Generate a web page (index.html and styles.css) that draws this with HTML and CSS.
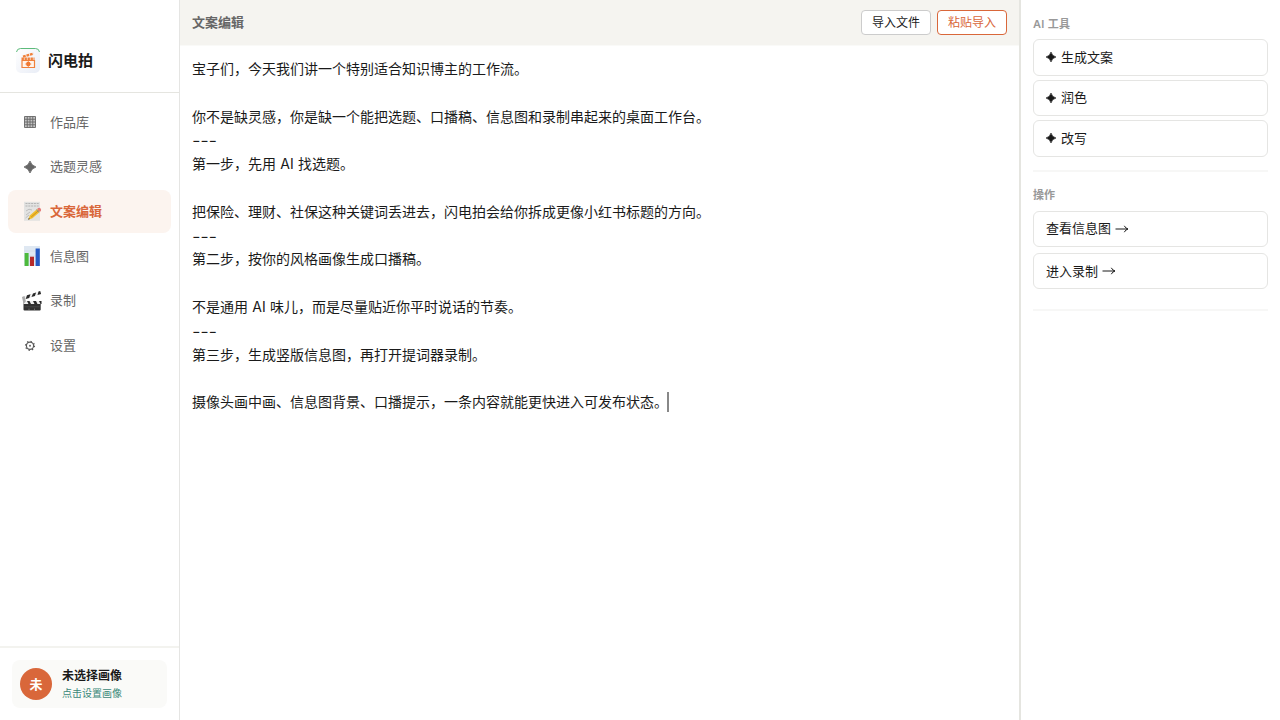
FILE: index.html
```html
<!DOCTYPE html>
<html lang="zh-CN">
<head>
  <meta charset="UTF-8" />
  <meta name="viewport" content="width=device-width, initial-scale=1.0"/>
  <title>闪电拍</title>
  <link rel="stylesheet" href="styles.css">
</head>
<body>
  <aside class="sidebar">
    <div class="brand">
      <svg class="brand-logo" viewBox="0 0 24 25">
        <defs>
          <linearGradient id="logoBg" x1="0" y1="0" x2="1" y2="1">
            <stop offset="0" stop-color="#ffffff"/>
            <stop offset="1" stop-color="#e9edf6"/>
          </linearGradient>
        </defs>
        <rect width="24" height="25" rx="5" fill="url(#logoBg)"/>
        <path d="M.5 4Q1 .5 4.5 .5H19.5Q23 .5 23.5 4" fill="none" stroke="#5dbb7b"/>
        <path d="M6 12.5V19.5H18.5V12.5Z" fill="#fff3ea" stroke="#f0803a" stroke-width="1.2"/>
        <path d="M5.5 10.8H18.5" stroke="#f0803a" stroke-width="2.6" stroke-dasharray="2.4 .6"/>
        <path d="M7 8.6L17.5 5.6" stroke="#f0803a" stroke-width="2.2" stroke-dasharray="2.8 .8"/>
        <circle cx="12.3" cy="16" r="2.2" fill="#f0702a"/>
        <path d="M12.3 13V19M9.3 16H15.3" stroke="#f0803a" stroke-width=".8"/>
      </svg>
      <span class="brand-name">闪电拍</span>
    </div>

    <nav class="nav">
      <a class="nav-item">
        <svg class="nav-icon" viewBox="0 0 20 20">
          <path d="M2.5 4.5H13.5V15.5H2.5ZM2.5 7.25H13.5M2.5 10H13.5M2.5 12.75H13.5M5.25 4.5V15.5M8 4.5V15.5M10.75 4.5V15.5" fill="#c4c4c4" stroke="#666" stroke-width=".9"/>
        </svg>
        <span>作品库</span>
      </a>
      <a class="nav-item">
        <svg class="nav-icon" viewBox="0 0 20 20">
          <path d="M8 4Q9.4 8.6 14 10Q9.4 11.4 8 16Q6.6 11.4 2 10Q6.6 8.6 8 4Z" fill="#666" stroke="#666" stroke-width=".8"/>
        </svg>
        <span>选题灵感</span>
      </a>
      <a class="nav-item active">
        <svg class="nav-icon" viewBox="0 0 20 20">
          <rect x="2" y=".8" width="16" height="19" fill="#e3e3e2"/>
          <path d="M3.5 2.5H17M3.5 5H17" stroke="#aaa" stroke-width=".8" stroke-dasharray="2 .8"/>
          <path d="M4 10Q7 7 10 9M4 14L8 11M3.5 17L7 14" fill="none" stroke="#b5b5b5" stroke-width=".8"/>
          <path d="M6.2 18.8L7.8 14.6L15.2 8L18 10.7L10.4 17.3Z" fill="#f0bd2c"/>
          <path d="M9.2 16L16.8 9.4" stroke="#c98b1c" stroke-width=".9"/>
          <path d="M15.2 8L16.2 7.1Q17.6 6.4 18.6 7.5Q19.5 8.8 18.9 9.9L18 10.7Z" fill="#e47b78"/>
          <path d="M14.4 8.7L17.2 11.4" stroke="#8a9499" stroke-width="1"/>
          <path d="M6.2 18.8L6.8 17.1L7.9 18.1Z" fill="#333"/>
        </svg>
        <span>文案编辑</span>
      </a>
      <a class="nav-item">
        <svg class="nav-icon" viewBox="0 0 20 20">
          <rect x="2" y="0" width="16" height="20" fill="#dfe8f2"/>
          <path d="M2 5H18M2 10H18M2 15H18" stroke="#cbd6e2" stroke-width=".5"/>
          <rect x="2.6" y="7" width="4" height="13" fill="#4cba3c"/>
          <rect x="8" y="10.7" width="4" height="9.3" fill="#b62a2a"/>
          <rect x="13.6" y="2.5" width="4.2" height="17.5" fill="#2459c4"/>
        </svg>
        <span>信息图</span>
      </a>
      <a class="nav-item">
        <svg class="nav-icon" viewBox="0.5 0.5 20 20">
          <rect x="2" y="11" width="17.2" height="9" rx="1" fill="#303030"/>
          <path d="M.5 6.4L18.6 .6L19.6 3.7L2 9.6Z" fill="#f2f2f2"/>
          <path d="M5.5 4.8L9 3.7L7.7 7.4L4.2 8.6ZM11.5 2.9L14.6 1.9L13.4 5.5L10 6.6ZM17 1.1L18.7 .6L19.6 3.5L16 4.6Z" fill="#292929"/>
          <path d="M2 10.5H20V13.5H2Z" fill="#eee"/>
          <path d="M5.5 10.5H8L9.5 13.5H7ZM11.5 10.5H14.5L16 13.5H13ZM17.5 10.5H20V13.5H19Z" fill="#292929"/>
          <path d="M.5 6.4L3 5.6L4.4 10.7L2 13.5Z" fill="#aaa"/>
          <path d="M3 16.3H18" stroke="#555" stroke-width=".6"/>
          <path d="M7 18.7H8M12.5 18.7H13.5" stroke="#aaa" stroke-width=".7"/>
        </svg>
        <span>录制</span>
      </a>
      <a class="nav-item">
        <svg class="nav-icon" viewBox="0 0 20 20">
          <circle cx="8" cy="10.8" r="3.6" fill="none" stroke="#5a5a5a" stroke-width="1.2"/>
          <circle cx="8" cy="10.8" r="4.5" fill="none" stroke="#5a5a5a" stroke-width="1.2" stroke-dasharray="1.3 2.234"/>
          <circle cx="8" cy="10.8" r="1" fill="#666"/>
        </svg>
        <span>设置</span>
      </a>
    </nav>

    <div class="sidebar-footer">
      <div class="profile">
        <div class="avatar">未</div>
        <div class="profile-info">
          <div class="profile-name">未选择画像</div>
          <div class="profile-hint">点击设置画像</div>
        </div>
      </div>
    </div>
  </aside>

  <main class="editor">
    <header class="toolbar">
      <h1>文案编辑</h1>
      <button class="btn">导入文件</button>
      <button class="btn btn-accent">粘贴导入</button>
    </header>
    <div class="script-text">
      <p>宝子们，今天我们讲一个特别适合知识博主的工作流。</p>
      <p><br></p>
      <p>你不是缺灵感，你是缺一个能把选题、口播稿、信息图和录制串起来的桌面工作台。</p>
      <p class="divider">---</p>
      <p>第一步，先用 AI 找选题。</p>
      <p><br></p>
      <p>把保险、理财、社保这种关键词丢进去，闪电拍会给你拆成更像小红书标题的方向。</p>
      <p class="divider">---</p>
      <p>第二步，按你的风格画像生成口播稿。</p>
      <p><br></p>
      <p>不是通用 AI 味儿，而是尽量贴近你平时说话的节奏。</p>
      <p class="divider">---</p>
      <p>第三步，生成竖版信息图，再打开提词器录制。</p>
      <p><br></p>
      <p>摄像头画中画、信息图背景、口播提示，一条内容就能更快进入可发布状态。<span class="caret"></span></p>
    </div>
  </main>

  <aside class="tools">
    <section class="tool-group ai">
      <h2>AI 工具</h2>
      <button class="tool-btn"><svg class="spark" viewBox="0 0 12 12"><path d="M6 1Q7 5 11 6Q7 7 6 11Q5 7 1 6Q5 5 6 1Z"/></svg><span>生成文案</span></button>
      <button class="tool-btn"><svg class="spark" viewBox="0 0 12 12"><path d="M6 1Q7 5 11 6Q7 7 6 11Q5 7 1 6Q5 5 6 1Z"/></svg><span>润色</span></button>
      <button class="tool-btn"><svg class="spark" viewBox="0 0 12 12"><path d="M6 1Q7 5 11 6Q7 7 6 11Q5 7 1 6Q5 5 6 1Z"/></svg><span>改写</span></button>
    </section>
    <section class="tool-group actions">
      <h2>操作</h2>
      <button class="tool-btn"><span>查看信息图</span><svg class="arrow" viewBox="0 0 14 12"><path d="M.5 6H12.8M9.3 2.8Q10.5 5.3 13 6Q10.5 6.7 9.3 9.2"/></svg></button>
      <button class="tool-btn"><span>进入录制</span><svg class="arrow" viewBox="0 0 14 12"><path d="M.5 6H12.8M9.3 2.8Q10.5 5.3 13 6Q10.5 6.7 9.3 9.2"/></svg></button>
    </section>
  </aside>
</body>
</html>
```
FILE: styles.css
```css
* {
  box-sizing: border-box;
}

body {
  font-family: Inter, "Noto Sans CJK SC", sans-serif;
  font-size: 13px;
  color: #1a1a1a;
  background: #fff;
  margin: 0;
  height: 100vh;
  display: flex;
  overflow: hidden;
}

h1, h2, p {
  margin: 0;
}

button {
  font-family: inherit;
  color: #1a1a1a;
  background: #fff;
}

/* Sidebar */
.sidebar {
  width: 180px;
  flex-shrink: 0;
  display: flex;
  flex-direction: column;
  border-right: 1px solid #e5e5e3;
}

.brand {
  height: 93px;
  padding: 28px 16px 0;
  display: flex;
  align-items: center;
  gap: 8px;
  border-bottom: 1px solid #e5e5e0;
}

.brand-logo {
  width: 24px;
  height: 25px;
}

.brand-name {
  font-size: 15px;
  font-weight: 600;
  padding-bottom: 2px;
}

.nav {
  flex: 1;
  padding: 8px;
  display: flex;
  flex-direction: column;
  gap: 2px;
}

.nav-item {
  height: 42.6px;
  padding: 0 14px;
  display: flex;
  align-items: center;
  gap: 8px;
  border-radius: 8px;
  color: #666;
}

.nav-item span {
  padding-bottom: 2px;
}

.nav-item.active {
  background: #fcf4ef;
  color: #d9673a;
  font-weight: 600;
}

.nav-icon {
  width: 20px;
  height: 20px;
}

.sidebar-footer {
  border-top: 2px solid #f3f3ef;
  padding: 12px;
}

.profile {
  height: 48px;
  padding: 8px;
  display: flex;
  align-items: center;
  gap: 10px;
  border-radius: 8px;
  background: #fafaf8;
}

.avatar {
  width: 32px;
  height: 32px;
  padding-bottom: 2px;
  display: flex;
  align-items: center;
  justify-content: center;
  border-radius: 50%;
  background: #d9673a;
  color: #fff;
  font-weight: 700;
}

.profile-name {
  font-size: 12px;
  line-height: 18px;
  font-weight: 600;
}

.profile-hint {
  font-size: 10px;
  line-height: 16px;
  color: #3b8878;
}

/* Editor */
.editor {
  flex: 1;
  min-width: 0;
}

.toolbar {
  height: 46px;
  padding: 0 12px 1px 12px;
  display: flex;
  align-items: center;
  gap: 6px;
  background: #f5f4f0;
  border-bottom: 1px solid #fafaf8;
}

.toolbar h1 {
  flex: 1;
  padding-bottom: 2px;
  font-size: 13px;
  font-weight: 600;
  color: #666;
}

.btn {
  width: 70px;
  height: 25px;
  padding: 2px 0 0;
  border: 1px solid #ccc;
  border-radius: 4px;
  font-size: 12px;
  line-height: 20px;
}

.btn-accent {
  border-color: #d9673a;
  color: #d9673a;
}

.script-text {
  padding: 11px 12px;
  font-size: 14px;
  line-height: 23.8px;
  word-spacing: 0.4px;
}

.script-text p {
  height: 23.8px;
  white-space: nowrap;
}

.script-text .divider {
  font-size: 19px;
  font-weight: 300;
  line-height: 25px;
  letter-spacing: -0.4px;
}

.caret {
  display: inline-block;
  width: 2px;
  height: 20px;
  margin-left: -1px;
  margin-bottom: 2px;
  vertical-align: middle;
  background: #888;
}

/* Right panel */
.tools {
  width: 261px;
  flex-shrink: 0;
  padding: 16px 12px;
  border-left: 2px solid #e5e5e0;
}

.tool-group {
  display: flex;
  flex-direction: column;
  gap: 4px;
  padding-bottom: 13.5px;
  margin-bottom: 15px;
  border-bottom: 2px solid #f7f7f6;
}

.tool-group h2 {
  font-size: 11px;
  line-height: 16px;
  font-weight: 600;
  letter-spacing: 0.3px;
  color: #999;
  margin-bottom: 3px;
}

.tool-group.actions {
  gap: 5.7px;
  padding-bottom: 19.5px;
}

.actions h2 {
  margin-bottom: 2px;
  letter-spacing: 0;
}

.tool-btn {
  height: 36.5px;
  padding: 0 12px;
  display: flex;
  align-items: center;
  border: 1px solid #e5e5e3;
  border-radius: 6px;
  font-size: 13px;
}

.tool-btn span {
  padding-bottom: 2px;
}

.spark {
  width: 12px;
  height: 12px;
  margin-right: 4px;
  margin-left: -1px;
  fill: #1a1a1a;
  stroke: #1a1a1a;
  stroke-width: 0.6;
}

.arrow {
  width: 14px;
  height: 12px;
  margin-left: 4px;
  fill: none;
  stroke: #1a1a1a;
  stroke-width: 1;
}
```
